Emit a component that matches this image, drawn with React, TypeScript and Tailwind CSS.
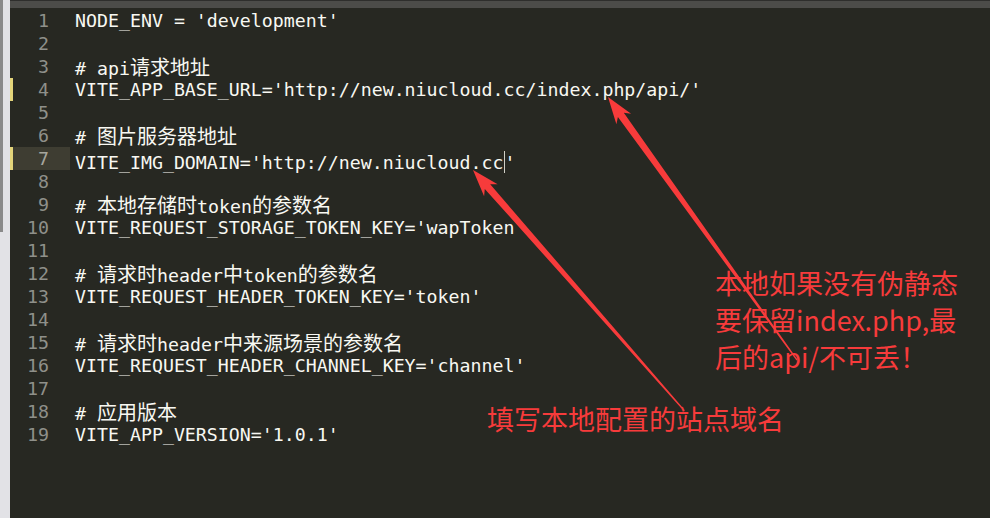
const lines: string[] = [
  "NODE_ENV = 'development'",
  "",
  "# api请求地址",
  "VITE_APP_BASE_URL='http://new.niucloud.cc/index.php/api/'",
  "",
  "# 图片服务器地址",
  "VITE_IMG_DOMAIN='http://new.niucloud.cc'",
  "",
  "# 本地存储时token的参数名",
  "VITE_REQUEST_STORAGE_TOKEN_KEY='wapToken'",
  "",
  "# 请求时header中token的参数名",
  "VITE_REQUEST_HEADER_TOKEN_KEY='token'",
  "",
  "# 请求时header中来源场景的参数名",
  "VITE_REQUEST_HEADER_CHANNEL_KEY='channel'",
  "",
  "# 应用版本",
  "VITE_APP_VERSION='1.0.1'",
];

const modified = [4, 7];
const currentLine = 7;

// split a line into ascii / cjk runs so the cjk fallback gets its own size
function Segments({ text }: { text: string }) {
  const parts = text.split(/([\u4e00-\u9fff]+)/).filter(Boolean);
  return (
    <>
      {parts.map((p, i) =>
        /[\u4e00-\u9fff]/.test(p) ? (
          <span key={i} className="font-['Noto_Sans_CJK_SC',sans-serif] text-[20px]">
            {p}
          </span>
        ) : (
          <span key={i}>{p}</span>
        )
      )}
    </>
  );
}

type Pt = [number, number];

// tapered screenshot-tool arrow, tip first
function arrowPoints(tip: Pt, tail: Pt) {
  const dx = tail[0] - tip[0];
  const dy = tail[1] - tip[1];
  const len = Math.hypot(dx, dy);
  const u: Pt = [dx / len, dy / len];
  const n: Pt = [-u[1], u[0]];
  const at = (d: number, w: number): Pt => [tip[0] + u[0] * d + n[0] * w, tip[1] + u[1] * d + n[1] * w];
  const pts: Pt[] = [
    tip,
    at(27, 9),
    at(22, 3.6),
    [tail[0] + n[0] * 0.6, tail[1] + n[1] * 0.6],
    [tail[0] - n[0] * 0.6, tail[1] - n[1] * 0.6],
    at(22, -3.6),
    at(27, -9),
  ];
  return pts.map((p) => `${p[0].toFixed(1)},${p[1].toFixed(1)}`).join(" ");
}

export default function App() {
  return (
    <div className="relative flex h-[518px] w-[990px] overflow-hidden bg-[#272822]">
      {/* sidebar edge */}
      <div className="flex w-[10px] shrink-0 flex-col bg-[#e2e2e6]">
        <div className="h-[232px] w-[3px] bg-[#8a8a8a]" />
      </div>

      <div className="flex flex-1 flex-col">
        {/* tab bar remnant */}
        <div className="h-[8px] shrink-0 border-t border-[#2e2e2c] bg-[#4c4c49]" />

        <div className="flex flex-col pt-[1px] font-['DejaVu_Sans_Mono','Noto_Sans_CJK_SC',monospace] text-[18.25px] leading-[23px]">
          {lines.map((line, i) => {
            const num = i + 1;
            const isMod = modified.includes(num);
            const isCur = num === currentLine;
            return (
              <div key={num} className="flex h-[23px] whitespace-pre">
                <div className={isMod ? "w-[3px] bg-[#e3d47a]" : "w-[3px]"} />
                <div
                  className={
                    isCur
                      ? "w-[57px] bg-[#3e3d32] pr-[21px] text-right text-[#a6a69e]"
                      : "w-[57px] pr-[21px] text-right text-[#8f908a]"
                  }
                >
                  {num}
                </div>
                <div className="pl-[5px] text-[#f8f8f2]">
                  {isCur ? (
                    <>
                      {"VITE_IMG_DOMAIN='http://new.niucloud.cc"}
                      <span className="inline-block h-[22px] w-[1px] translate-y-[4px] bg-[#d0d0c8]" />
                      {"'"}
                    </>
                  ) : (
                    <Segments text={line} />
                  )}
                </div>
              </div>
            );
          })}
        </div>
      </div>

      {/* annotations */}
      <svg className="pointer-events-none absolute left-0 top-0" width="990" height="518">
        <polygon points={arrowPoints([608, 97], [797, 360])} fill="#f73b3b" />
        <polygon points={arrowPoints([473, 170], [682, 408])} fill="#f73b3b" />
      </svg>

      <div className="absolute left-[715px] top-[264px] font-['Noto_Sans_CJK_SC',sans-serif] text-[27px] leading-[37px] text-[#f73b3b]">
        <div>本地如果没有伪静态</div>
        <div>要保留index.php,最</div>
        <div>后的api/不可丢！</div>
      </div>

      <div className="absolute left-[487px] top-[400px] font-['Noto_Sans_CJK_SC',sans-serif] text-[27px] leading-[37px] text-[#f73b3b]">
        填写本地配置的站点域名
      </div>
    </div>
  );
}
